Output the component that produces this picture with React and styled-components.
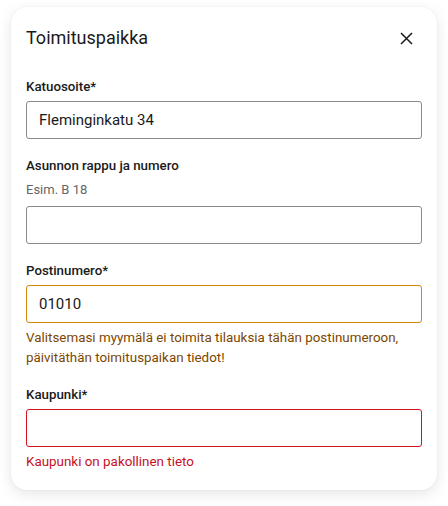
import { createGlobalStyle } from "styled-components";
import styled from "styled-components";

const GlobalStyle = createGlobalStyle`
  body {
    margin: 0;
    background: #ffffff;
    font-family: Roboto, "Noto Sans", sans-serif;
    color: #1a1a1a;
  }
`;

const Page = styled.div`
  padding: 7px 11px 16px;
`;

const Card = styled.div`
  background: #fff;
  border-radius: 16px;
  box-shadow: 0 4px 14px rgba(0, 0, 0, 0.1), 0 0 2px rgba(0, 0, 0, 0.06);
  padding: 19px 15px 18px;
  width: 426px;
  box-sizing: border-box;
`;

const Header = styled.div`
  display: flex;
  justify-content: space-between;
  align-items: center;
  height: 24px;
  margin-bottom: 27px;
`;

const Title = styled.h2`
  margin: 0;
  font-size: 18px;
  font-weight: 400;
  line-height: 24px;
`;

const CloseButton = styled.button`
  border: 0;
  background: none;
  padding: 0;
  margin-right: 8px;
  width: 16px;
  height: 16px;
  display: flex;
  align-items: center;
  justify-content: center;
  cursor: pointer;
  color: #1a1a1a;
`;

const Form = styled.form`
  display: flex;
  flex-direction: column;
  gap: 17px;
`;

const Field = styled.div`
  display: flex;
  flex-direction: column;
`;

const Label = styled.label`
  font-size: 13.3px;
  font-weight: 500;
  line-height: 20px;
  margin-bottom: 4px;
`;

const Hint = styled.div`
  font-size: 13px;
  line-height: 20px;
  color: #666;
  margin-bottom: 6px;
`;

const borders = {
  normal: "#8a8a8a",
  warning: "#d9870b",
  error: "#d0101e",
};

const Input = styled.input`
  box-sizing: border-box;
  height: 38px;
  width: 100%;
  border: 1px solid ${({ $state }) => borders[$state || "normal"]};
  border-radius: 3px;
  padding: 0 12px;
  font-family: inherit;
  font-size: 15px;
  color: #1a1a1a;
  outline: none;
`;

const Message = styled.div`
  margin-top: 5px;
  font-size: 13.4px;
  line-height: 20px;
  color: ${({ $tone }) => ($tone === "warning" ? "#7d4700" : "#c8101e")};
`;

function CloseIcon() {
  return (
    <svg width="13" height="13" viewBox="0 0 13 13" fill="none">
      <path d="M1 1L12 12M12 1L1 12" stroke="currentColor" strokeWidth="1.5" />
    </svg>
  );
}

export default function App() {
  return (
    <>
      <GlobalStyle />
      <Page>
        <Card>
          <Header>
            <Title>Toimituspaikka</Title>
            <CloseButton aria-label="Sulje">
              <CloseIcon />
            </CloseButton>
          </Header>
          <Form>
            <Field>
              <Label>Katuosoite*</Label>
              <Input defaultValue="Fleminginkatu 34" />
            </Field>
            <Field>
              <Label>Asunnon rappu ja numero</Label>
              <Hint>Esim. B 18</Hint>
              <Input />
            </Field>
            <Field>
              <Label>Postinumero*</Label>
              <Input $state="warning" defaultValue="01010" />
              <Message $tone="warning">
                Valitsemasi myymälä ei toimita tilauksia tähän postinumeroon,
                päivitäthän toimituspaikan tiedot!
              </Message>
            </Field>
            <Field>
              <Label>Kaupunki*</Label>
              <Input $state="error" />
              <Message $tone="error">Kaupunki on pakollinen tieto</Message>
            </Field>
          </Form>
        </Card>
      </Page>
    </>
  );
}
